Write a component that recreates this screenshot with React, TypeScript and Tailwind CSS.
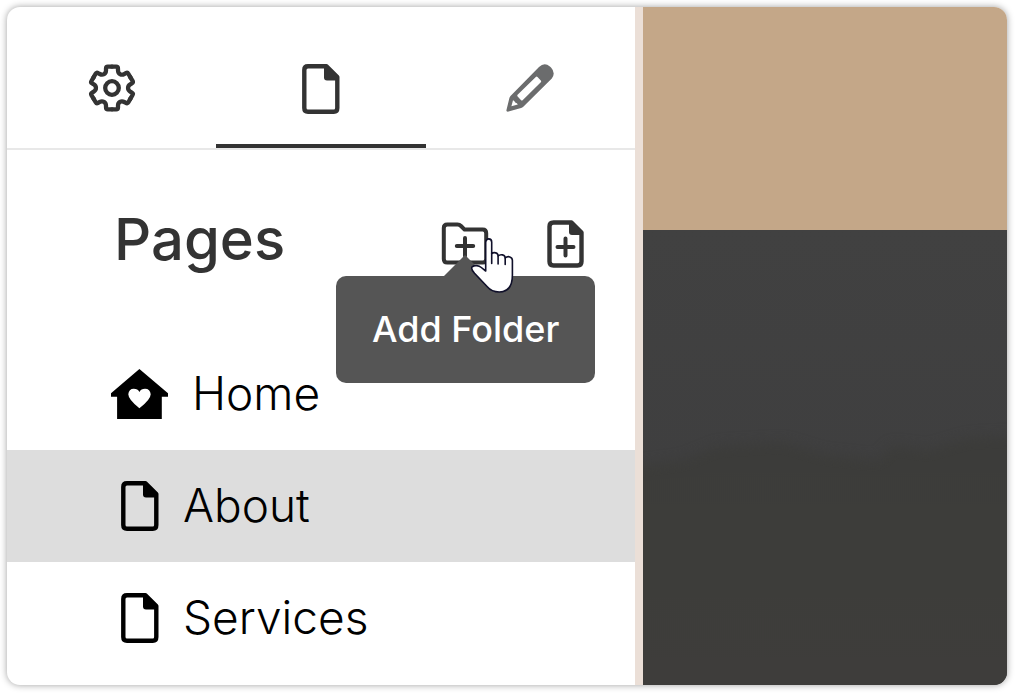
import React from "react";

function GearIcon() {
  const segment =
    "M0 -21.3H-4.2Q-6 -21.3 -6 -19.5V-17.5Q-6 -15.1 -8 -13.9Q-10 -12.8 -12.2 -14L-13.9 -14.9Q-15.5 -15.9 -16.4 -14.3L-18.45 -10.65";
  return (
    <svg width="48" height="48" viewBox="-24 -24 48 48" fill="none" stroke="#333" strokeWidth="4.3" strokeLinecap="round" aria-hidden="true">
      {[0, 60, 120, 180, 240, 300].map((angle) => (
        <path key={angle} d={segment} transform={`rotate(${angle})`} />
      ))}
      <circle r="6.8" />
    </svg>
  );
}

function PageIcon() {
  return (
    <svg width="38" height="50" viewBox="0 0 38 50" fill="none" stroke="currentColor" strokeWidth="4.4" strokeLinejoin="round" aria-hidden="true">
      <path d="M6 2.3H24.5L35.3 13V44Q35.3 47.7 31.8 47.7H6Q2.3 47.7 2.3 44V6Q2.3 2.3 6 2.3Z" />
      <path d="M22 1H25L36.5 12V16.5H25Q22 16.5 22 13.5Z" fill="currentColor" stroke="none" />
    </svg>
  );
}

function PagePlusIcon() {
  return (
    <svg width="38" height="48" viewBox="0 0 38 48" fill="none" stroke="#333" strokeWidth="4.4" strokeLinejoin="round" aria-hidden="true">
      <path d="M6.5 2.5H24.5L34.5 12.5V41.5Q34.5 45.5 30.5 45.5H6.5Q2.5 45.5 2.5 41.5V6.5Q2.5 2.5 6.5 2.5Z" />
      <path d="M22 1H25L36 12V15H25Q22 15 22 12Z" fill="#333" stroke="none" />
      <path d="M18.5 18.5V35.5M10.5 27H26.5" strokeLinecap="round" strokeWidth="4" />
    </svg>
  );
}

function PencilIcon() {
  return (
    <svg width="48" height="48" viewBox="0 0 48 48" fill="#6b6c6d" fillRule="evenodd" aria-hidden="true">
      <path d="M0.7 47.3Q0.2 46.8 0.6 45.5L3.4 34Q3.7 32.9 4.5 32L33 2.9Q38.5 -2 43.9 2.5L45 3.6Q50 9 45.8 14.4L17.3 42.7Q16.3 43.7 15.1 44.1L2.5 47.6Q1.3 47.9 0.7 47.3ZM11.6 30.8L29.8 13Q30.7 12.2 31.5 13L34.8 16.6Q35.5 17.5 34.8 18.3L16.6 36.2Q15.7 36.9 14.9 36L11.6 32.4Q11 31.5 11.6 30.8ZM7 36.3L5.4 42.3L11.8 40.4Q11.2 38.8 9.2 38.4Q8.4 36.7 7 36.3Z" />
    </svg>
  );
}

function FolderPlusIcon() {
  return (
    <svg width="48" height="44" viewBox="0 0 48 44" fill="none" stroke="#333" strokeWidth="4" strokeLinejoin="round" strokeLinecap="round" aria-hidden="true">
      <path d="M2.8 6Q2.8 2.5 6.3 2.5H16.5Q18.5 2.5 20 4L23.6 7.6H41.7Q45.2 7.6 45.2 11.2V37Q45.2 40.5 41.7 40.5H6.3Q2.8 40.5 2.8 37Z" />
      <path d="M24 16V34M15.8 24H32.2" />
    </svg>
  );
}

function HomeIcon() {
  return (
    <svg width="57" height="50" viewBox="0 0 57 50" fill="#000" fillRule="evenodd" aria-hidden="true">
      <path d="M28.4 0L57 24.2V27.7H50.8V50H6.1V27.7H0V24.2ZM28.4 39.3Q17.3 30.5 17.3 25.3Q17.8 19.7 22.8 19.7Q26.8 19.7 28.4 23Q30 19.7 34 19.7Q39.2 19.7 39.7 25.3Q39.7 30.5 28.4 39.3Z" />
    </svg>
  );
}

function HandCursor() {
  return (
    <svg className="pointer-events-none absolute left-[29px] top-[16px] z-20" width="44" height="56" viewBox="0 0 44 56" fill="#fff" stroke="#10102a" strokeWidth="1.6" strokeLinejoin="round" strokeLinecap="round" aria-hidden="true">
      <path d="M15.7 33V4.2C15.7 -0.2 21.7 -0.2 21.7 4.2V15.5C24 13.9 28.1 14.6 28.1 18C30.5 15.7 35.2 16.7 35.2 20C38 17.4 42.4 18.8 42.4 22.5V37C42.4 47 38.5 54 29.3 54C23.5 54 20.3 52.5 17.3 48.8L4.5 35.2C2 32.4 0.8 30.3 2.2 28.8C4.8 26.7 9 27.6 11.3 29.5Z" />
      <path d="M21.7 15V25.5M28.1 18V26M35.2 20V26.5" fill="none" />
    </svg>
  );
}

function PageRow({ label, home = false, active = false }: { label: string; home?: boolean; active?: boolean }) {
  return (
    <li>
      <a
        href="#"
        aria-current={active ? "page" : undefined}
        className={`flex h-28 items-center gap-6 text-[46px] leading-[56px] font-light text-black ${home ? "pl-[104px]" : "pl-[114px]"} ${active ? "bg-[#dddddd]" : ""}`}
      >
        {home ? <HomeIcon /> : <PageIcon />}
        <span className="pb-0.5">{label}</span>
      </a>
    </li>
  );
}

export default function App() {
  return (
    <div className="flex min-h-screen bg-white p-2 pl-[7px] pt-[7px] font-['Inter','Noto_Sans',sans-serif]">
      <main className="flex flex-1 overflow-hidden rounded-[13px] bg-white shadow-[0_0_7px_rgba(0,0,0,0.38)]">
        <aside className="w-[63.6%] shrink-0 border-r-8 border-[#ebdfd7]">
          <nav className="grid h-[143px] grid-cols-3 border-b-2 border-[#e8e8e8] text-[#333]">
            <button type="button" aria-label="Settings" className="flex justify-center pt-[57px]">
              <GearIcon />
            </button>
            <button type="button" aria-label="Pages" className="flex justify-center border-b-4 border-[#333] pt-[57px]">
              <PageIcon />
            </button>
            <button type="button" aria-label="Design" className="flex justify-center pt-[57px]">
              <PencilIcon />
            </button>
          </nav>

          <div className="flex h-[188px] items-center justify-between pl-[107px] pr-[50px] text-[#333]">
            <h1 className="pb-2.5 text-[58px] leading-[64px] font-medium">Pages</h1>
            <div className="flex items-center gap-[58px]">
              <div className="relative">
                <button type="button" aria-describedby="folder-tip" aria-label="Add Folder" className="block">
                  <FolderPlusIcon />
                </button>
                <div id="folder-tip" role="tooltip" className="absolute left-[-105px] top-[54px] z-10 rounded-[10px] bg-[#555] px-9 py-8 text-[36px] leading-[43px] font-medium whitespace-nowrap text-white">
                  <svg className="absolute left-[107px] top-[-21px]" width="44" height="22" viewBox="0 0 44 22" fill="#555" aria-hidden="true">
                    <path d="M0 22L22 0L44 22Z" />
                  </svg>
                  Add Folder
                </div>
                <HandCursor />
              </div>
              <button type="button" aria-label="Add Page" className="block">
                <PagePlusIcon />
              </button>
            </div>
          </div>

          <ul>
            <PageRow label="Home" home />
            <PageRow label="About" active />
            <PageRow label="Services" />
          </ul>
        </aside>

        <section aria-label="Site preview" className="flex flex-1 flex-col">
          <div className="h-[223px] bg-[#c4a788]" />
          <div className="flex flex-1 bg-linear-to-b from-[#414141] to-[#3d3d3e]">
            <svg className="h-full w-full" viewBox="0 0 364 455" preserveAspectRatio="none" aria-hidden="true">
              <defs>
                <linearGradient id="hill" x1="0" y1="0" x2="0" y2="1">
                  <stop offset="0" stopColor="#3c3c3a" />
                  <stop offset="0.4" stopColor="#3d3d3a" />
                  <stop offset="1" stopColor="#3e3d3b" />
                </linearGradient>
                <filter id="soft" colorInterpolationFilters="sRGB">
                  <feGaussianBlur stdDeviation="6" />
                </filter>
              </defs>
              <path d="M-20 238L40 230L75 216L140 212L180 224L235 230L250 215L285 220L325 208L384 205V480H-20Z" fill="url(#hill)" filter="url(#soft)" />
            </svg>
          </div>
        </section>
      </main>
    </div>
  );
}
